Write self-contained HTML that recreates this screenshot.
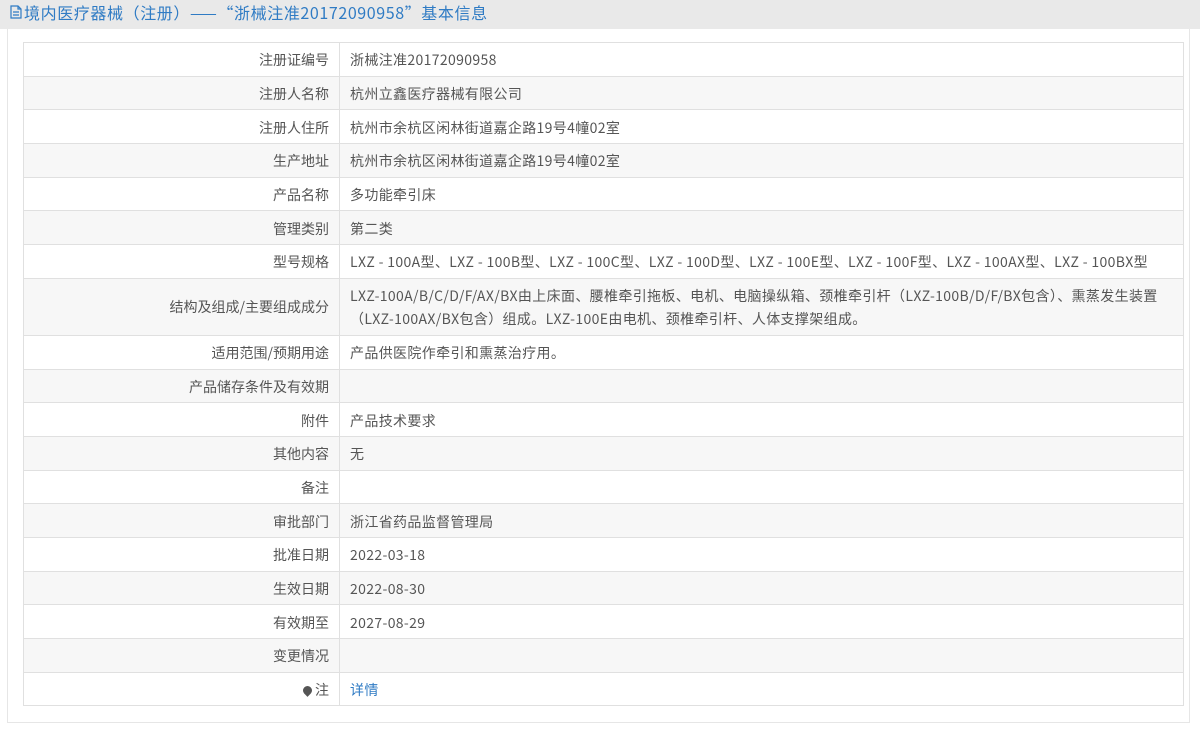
<!DOCTYPE html>
<html><head><meta charset="utf-8"><style>
*{margin:0;padding:0;box-sizing:border-box}
body{width:1200px;height:750px;background:#fff;font-family:"Noto Sans CJK SC",sans-serif;font-size:14px;color:#555;position:relative;overflow:hidden}
.hd{position:absolute;left:0;top:0;width:1200px;height:29px;background:#e9e9e9;color:#2f7bc4;font-size:16px;letter-spacing:0.6px;line-height:24px;padding-left:24px;white-space:nowrap}
.hd svg{position:absolute;left:10px;top:5px}
.panel{position:absolute;left:7px;top:29px;width:1183px;height:694px;border:1px solid #e6e6e6;border-top:none}
table{position:absolute;left:23px;top:42px;width:1161px;border-collapse:collapse;border:1px solid #d6d6d6}
td{border:1px solid #e0e0e0;height:33.7px;padding:2px 10px 0;vertical-align:middle;line-height:18px;white-space:nowrap}
td.l{width:316px;text-align:right}
td.v{letter-spacing:0.35px}
tr:nth-child(even) td{background:#f7f7f7}
tr.tall td{height:57px;line-height:23px}
a{color:#2f7bc4;text-decoration:none}
.pin{display:inline-block;width:9px;height:9px;background:#555;border-radius:50% 50% 50% 0;transform:rotate(-45deg);margin-right:3px;vertical-align:0}
</style></head><body>
<div class="hd"><svg width="12" height="14" viewBox="0 0 12 14"><path d="M1 1h7l3 3v9H1z M8 1v3h3 M3 7h6 M3 10h6" fill="none" stroke="#2f7bc4" stroke-width="1.2"/></svg>境内医疗器械（注册）——“浙械注准20172090958”基本信息</div>
<div class="panel"></div>
<table>
<tr><td class="l">注册证编号</td><td class="v">浙械注准20172090958</td></tr>
<tr><td class="l">注册人名称</td><td class="v">杭州立鑫医疗器械有限公司</td></tr>
<tr><td class="l">注册人住所</td><td class="v">杭州市余杭区闲林街道嘉企路19号4幢02室</td></tr>
<tr><td class="l">生产地址</td><td class="v">杭州市余杭区闲林街道嘉企路19号4幢02室</td></tr>
<tr><td class="l">产品名称</td><td class="v">多功能牵引床</td></tr>
<tr><td class="l">管理类别</td><td class="v">第二类</td></tr>
<tr><td class="l">型号规格</td><td class="v">LXZ - 100A型、LXZ - 100B型、LXZ - 100C型、LXZ - 100D型、LXZ - 100E型、LXZ - 100F型、LXZ - 100AX型、LXZ - 100BX型</td></tr>
<tr class="tall"><td class="l">结构及组成/主要组成成分</td><td class="v">LXZ-100A/B/C/D/F/AX/BX由上床面、腰椎牵引拖板、电机、电脑操纵箱、颈椎牵引杆（LXZ-100B/D/F/BX包含）、熏蒸发生装置<br>（LXZ-100AX/BX包含）组成。LXZ-100E由电机、颈椎牵引杆、人体支撑架组成。</td></tr>
<tr><td class="l">适用范围/预期用途</td><td class="v">产品供医院作牵引和熏蒸治疗用。</td></tr>
<tr><td class="l">产品储存条件及有效期</td><td class="v"></td></tr>
<tr><td class="l">附件</td><td class="v">产品技术要求</td></tr>
<tr><td class="l">其他内容</td><td class="v">无</td></tr>
<tr><td class="l">备注</td><td class="v"></td></tr>
<tr><td class="l">审批部门</td><td class="v">浙江省药品监督管理局</td></tr>
<tr><td class="l">批准日期</td><td class="v">2022-03-18</td></tr>
<tr><td class="l">生效日期</td><td class="v">2022-08-30</td></tr>
<tr><td class="l">有效期至</td><td class="v">2027-08-29</td></tr>
<tr><td class="l">变更情况</td><td class="v"></td></tr>
<tr><td class="l"><span class="pin"></span>注</td><td class="v"><a>详情</a></td></tr>
</table>
</body></html>
